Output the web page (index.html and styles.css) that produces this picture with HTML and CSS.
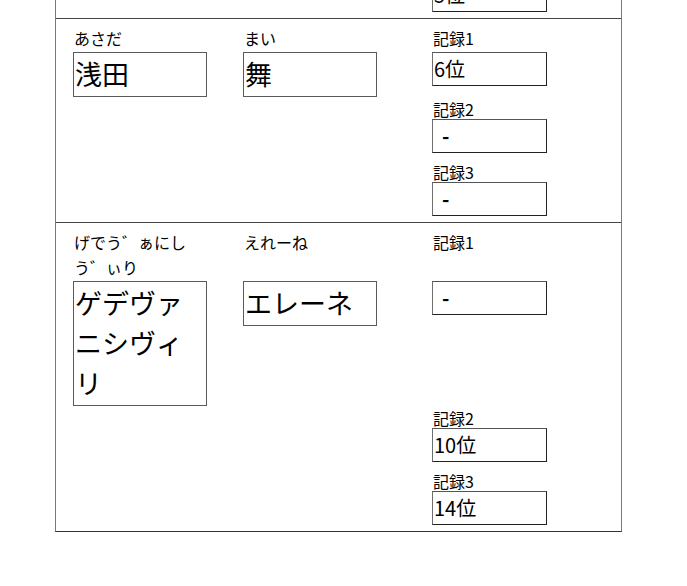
FILE: index.html
```html
<!DOCTYPE html>
<html lang="ja">
<head>
<meta charset="utf-8">
<title>記録一覧</title>
<link rel="stylesheet" href="styles.css">
</head>
<body>
<div class="sheet">
  <div class="entry">
    <div class="label top k1">やまだ</div>
    <div class="label top k2">はな</div>
    <div class="label top l1">記録1</div>
    <div class="name n1">山田</div>
    <div class="name n2">花</div>
    <div class="rec-box b1">3位</div>
    <div class="rec r2"><div class="label">記録2</div><div class="rec-box">7位</div></div>
    <div class="rec r3"><div class="label">記録3</div><div class="rec-box">5位</div></div>
  </div>
  <div class="entry">
    <div class="label top k1">あさだ</div>
    <div class="label top k2">まい</div>
    <div class="label top l1">記録1</div>
    <div class="name n1">浅田</div>
    <div class="name n2">舞</div>
    <div class="rec-box b1">6位</div>
    <div class="rec r2"><div class="label">記録2</div><div class="rec-box"><span class="nil">-</span></div></div>
    <div class="rec r3"><div class="label">記録3</div><div class="rec-box"><span class="nil">-</span></div></div>
  </div>
  <div class="entry">
    <div class="label top k1">げでう゛ぁにしう゛ぃり</div>
    <div class="label top k2">えれーね</div>
    <div class="label top l1">記録1</div>
    <div class="name n1">ゲデヴァニシヴィリ</div>
    <div class="name n2">エレーネ</div>
    <div class="rec-box b1"><span class="nil">-</span></div>
    <div class="rec r2"><div class="label">記録2</div><div class="rec-box">10位</div></div>
    <div class="rec r3"><div class="label">記録3</div><div class="rec-box">14位</div></div>
  </div>
</div>
</body>
</html>
```

FILE: styles.css
```css
html, body {
  margin: 0;
  padding: 0;
  background: #fff;
}

body {
  font-family: "Noto Sans CJK JP", "Noto Sans", sans-serif;
  color: #000;
}

.sheet {
  box-sizing: border-box;
  width: 567px;
  margin: -186px 0 0 55px;
  border-left: 1px solid #7a7a7a;
  border-right: 1px solid #7a7a7a;
  border-bottom: 1px solid #333;
}

.entry {
  display: grid;
  grid-template-columns: 170px 189px 115px;
  grid-template-areas:
    "k1 k2 l1"
    "n1 n2 b1"
    ".  .  r2"
    ".  .  r3";
  align-items: start;
  padding: 7px 0 6px 17px;
  border-top: 1px solid #444;
}

.k1 { grid-area: k1; }
.k2 { grid-area: k2; }
.l1 { grid-area: l1; }
.n1 { grid-area: n1; }
.n2 { grid-area: n2; }
.b1 { grid-area: b1; }
.r2 { grid-area: r2; margin-top: 2px; }
.r3 { grid-area: r3; margin-top: 9px; }

.label {
  font-size: 16px;
  line-height: 20px;
  padding-left: 1px;
}

.label.top {
  line-height: 25px;
  margin-bottom: 1px;
  max-width: 120px;
}

.name {
  box-sizing: border-box;
  width: 134px;
  font-size: 27px;
  line-height: 40px;
  padding: 1px 1px 2px 1px;
  border: 1px solid #5a5a5a;
}

.rec {
  display: flex;
  flex-direction: column;
}

.rec-box {
  box-sizing: border-box;
  width: 115px;
  height: 34px;
  font-size: 20px;
  line-height: 30px;
  padding: 1px 1px;
  border: 1px solid #222;
  border-left-color: #6e6e6e;
  border-top-color: #555;
}

.nil {
  display: inline-block;
  padding-left: 8px;
  font-weight: 700;
}
```
